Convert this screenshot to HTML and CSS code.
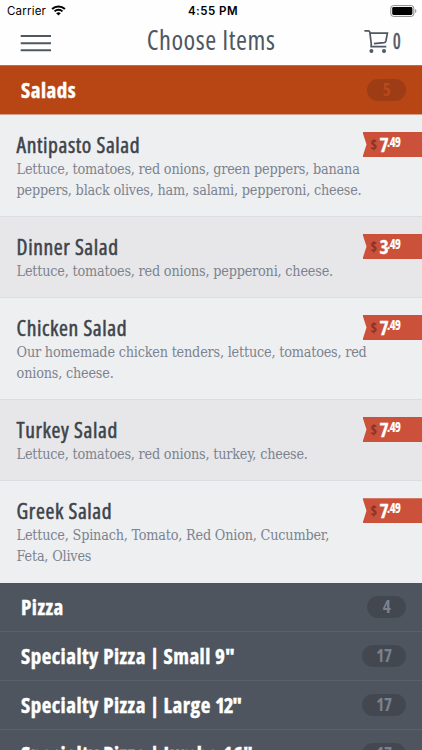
FILE: index.html
```html
<!DOCTYPE html>
<html lang="en">
<head>
<meta charset="utf-8">
<title>Choose Items</title>
<link rel="stylesheet" href="styles.css">
</head>
<body>
<header class="top">
  <div class="status">
    <div class="carrier">Carrier
      <svg width="15" height="11" viewBox="0 0 15 11"><path d="M1.1 4A9.2 9.2 0 0 1 13.9 4" fill="none" stroke="#000" stroke-width="2"/><path d="M3.5 6.4A5.8 5.8 0 0 1 11.5 6.4" fill="none" stroke="#000" stroke-width="1.9"/><path d="M7.5 10.6 5.2 8.2A3.4 3.4 0 0 1 9.8 8.2Z"/></svg>
    </div>
    <div class="time">4:55 PM</div>
    <svg class="battery" width="27" height="12" viewBox="0 0 27 12"><rect x=".8" y=".6" width="23" height="10.8" rx="2.6" fill="#fff" stroke="#888" stroke-width="1"/><rect x="2.2" y="2" width="20.2" height="8" rx="1.4"/><path d="M25.2 4v4q1.2-.5 1.2-2t-1.2-2Z" fill="#888"/></svg>
  </div>
  <div class="nav">
    <svg class="menu" width="32" height="18" viewBox="0 0 32 18"><path d="M.7 2H31M.7 9.2H31M.7 16.2H31" stroke="#4f5762" stroke-width="2"/></svg>
    <h1 class="title">Choose Items</h1>
    <div class="cart">
      <svg width="25" height="25" viewBox="0 0 25 25" fill="none" stroke="#4f5762" stroke-width="1.7"><path d="M.4 1.9H4.3Q5.4 1.9 5.8 3L7.2 14.2V17.6H22.3M6.2 4.1H23.4L21.9 12Q21.6 13.4 20.2 13.6L9.9 14.6"/><circle cx="7.4" cy="22" r="2" fill="#4f5762" stroke="none"/><circle cx="20" cy="22" r="2" fill="#4f5762" stroke="none"/></svg>
      <span class="cart-count">0</span>
    </div>
  </div>
</header>
<main>
  <div class="category open"><span>Salads</span><span class="count">5</span></div>
  <section class="items">
    <article class="item"><h2>Antipasto Salad</h2><p>Lettuce, tomatoes, red onions, green peppers, banana<br>peppers, black olives, ham, salami, pepperoni, cheese.</p><div class="price"><i>$</i><b>7</b><sup>.49</sup></div></article>
    <article class="item"><h2>Dinner Salad</h2><p>Lettuce, tomatoes, red onions, pepperoni, cheese.</p><div class="price"><i>$</i><b>3</b><sup>.49</sup></div></article>
    <article class="item"><h2>Chicken Salad</h2><p>Our homemade chicken tenders, lettuce, tomatoes, red<br>onions, cheese.</p><div class="price"><i>$</i><b>7</b><sup>.49</sup></div></article>
    <article class="item"><h2>Turkey Salad</h2><p>Lettuce, tomatoes, red onions, turkey, cheese.</p><div class="price"><i>$</i><b>7</b><sup>.49</sup></div></article>
    <article class="item"><h2>Greek Salad</h2><p>Lettuce, Spinach, Tomato, Red Onion, Cucumber,<br>Feta, Olives</p><div class="price"><i>$</i><b>7</b><sup>.49</sup></div></article>
  </section>
  <div class="category"><span>Pizza</span><span class="count">4</span></div>
  <div class="category"><span>Specialty Pizza | Small 9"</span><span class="count wide">17</span></div>
  <div class="category"><span>Specialty Pizza | Large <span class="tight">12"</span></span><span class="count wide">17</span></div>
  <div class="category"><span>Specialty Pizza | Jumbo 16"</span><span class="count wide">17</span></div>
</main>
</body>
</html>
```
FILE: styles.css
```css
* { box-sizing: border-box; margin: 0; padding: 0; }
body {
  height: 750px;
  overflow: hidden;
  background: #4e555e;
  font-family: "Open Sans", sans-serif;
  font-stretch: 75%;
}
svg { display: block; }
.top { height: 65px; background: #fefefe; }
.status {
  height: 21px;
  display: grid;
  grid-template-columns: 1fr auto 1fr;
  align-items: center;
  padding: 0 5px 0 7px;
  font: 500 11.5px Inter, sans-serif;
  color: #000;
}
.carrier { display: flex; align-items: center; gap: 5px; font-weight: 400; letter-spacing: .2px; }
.time { font-weight: 600; letter-spacing: .5px; margin-left: 2px; }
.battery { justify-self: end; }
.nav {
  height: 43px;
  display: grid;
  grid-template-columns: 1fr auto 1fr;
  align-items: center;
  padding: 0 20px 0 20px;
}
.menu { margin-top: 1px; }
.title {
  font-size: 26.5px;
  font-weight: 400;
  line-height: 36px;
  letter-spacing: .55px;
  color: #4f5762;
  margin-top: -5px;
}
.cart { justify-self: end; display: flex; align-items: center; gap: 4px; margin-top: -2px; }
.cart-count { font-size: 21px; line-height: 21px; color: #4f5762; -webkit-text-stroke: .6px #4f5762; width: 9px; transform: scaleX(.85); transform-origin: left; margin-top: -1px; }
.category {
  height: 48.9px;
  display: flex;
  align-items: center;
  justify-content: space-between;
  padding: 0 16px 0 21px;
  background: #4e555e;
  border-bottom: 1px solid #5a616a;
  color: #fff;
  font-size: 21px;
  font-weight: 700;
  letter-spacing: .48px;
  -webkit-text-stroke: .4px #fff;
  white-space: nowrap;
}
.category.open { height: 49.6px; background: #b84614; border-top: 1px solid #c66b45; border-bottom-color: #d4a08b; }
.tight { letter-spacing: -1.1px; }
.count {
  width: 39px;
  height: 22px;
  border-radius: 11px;
  background: #434850;
  color: #7b828d;
  font-size: 17px;
  line-height: 22px;
  letter-spacing: -.3px;
  text-align: center;
  -webkit-text-stroke: 0;
}
.count.wide { width: 44px; }
.open .count { background: #9e3c16; color: #b84a1c; }
.item {
  position: relative;
  height: 102px;
  padding: 17px 16px 0 16.6px;
  background: #eeeff1;
  border-bottom: 1px solid #dcdde0;
}
.item:nth-child(even) { height: 81.2px; background: #e7e7e9; }
.item:last-child { border-bottom: 0; }
.item h2 {
  font-size: 21.5px;
  font-weight: 400;
  line-height: 26px;
  letter-spacing: .6px;
  color: #3d434a;
  -webkit-text-stroke: .5px #3d434a;
  margin-bottom: 1.5px;
}
.item p {
  font: 14.3px/20.6px "DejaVu Serif", serif;
  font-stretch: 75%;
  letter-spacing: -.2px;
  color: #7c838e;
  white-space: nowrap;
}
.price {
  position: absolute;
  top: 17.3px;
  right: 0;
  width: 59.5px;
  height: 25px;
  display: flex;
  align-items: flex-start;
  padding-left: 8px;
  background: #cb513b;
  clip-path: polygon(0 0, 100% 0, 100% 100%, 0 100%, 4px 50%);
  color: #fff;
}
.price i { font: 700 14px/25px "Open Sans", sans-serif; font-stretch: 75%; width: 9px; color: #8c3024; }
.price b { font-size: 19.5px; line-height: 25px; letter-spacing: -1.4px; -webkit-text-stroke: .3px #fff; }
.price sup { font-size: 14px; font-weight: 700; line-height: 20px; letter-spacing: -.5px; transform: scaleX(.88); transform-origin: left; -webkit-text-stroke: .2px #fff; }
```
